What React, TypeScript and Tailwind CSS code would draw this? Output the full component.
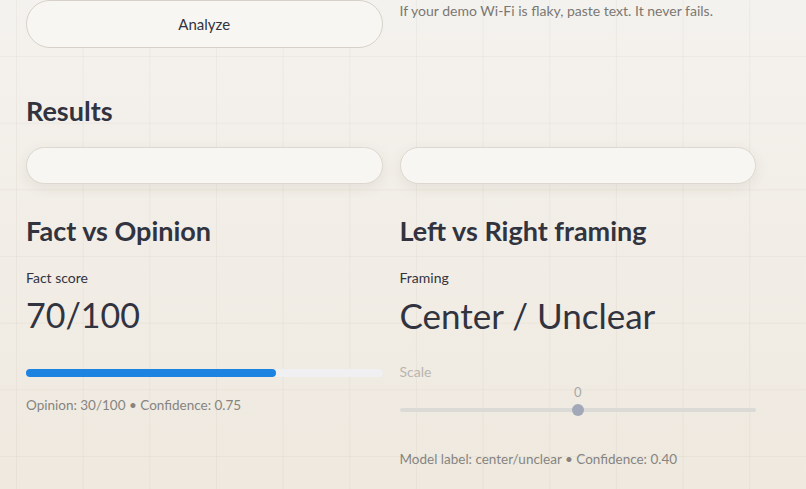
import React from 'react';

const font = { fontFamily: 'Lato, "Noto Sans", sans-serif' };

function EmptyBox() {
  return (
    <div className="h-[37px] rounded-full border border-[#dcd8cf] bg-[#f8f6f2] shadow-[0_4px_14px_rgba(80,60,30,0.08)]" />
  );
}

function FactPanel() {
  const fact = 70;
  return (
    <div className="flex flex-col">
      <h2 className="text-[27px] font-bold leading-[36px] text-[#31333f]">Fact vs Opinion</h2>
      <div className="mt-[19px] text-[14px] leading-[20px] text-[#31333f]">Fact score</div>
      <div className="mt-[5px] text-[34px] leading-[44px] text-[#31333f]">{fact}/100</div>
      <div className="mt-[32px] h-[8px] w-full rounded-full bg-[#f0f0f2]">
        <div className="h-full rounded-full bg-[#1c83e1]" style={{ width: `${fact}%` }} />
      </div>
      <div className="mt-[18px] text-[13.5px] leading-[20px] text-[#86847f]">Opinion: 30/100 • Confidence: 0.75</div>
    </div>
  );
}

function FramingPanel() {
  return (
    <div className="flex flex-col">
      <h2 className="text-[27px] font-bold leading-[36px] text-[#31333f]">Left vs Right framing</h2>
      <div className="mt-[19px] text-[14px] leading-[20px] text-[#31333f]">Framing</div>
      <div className="mt-[5px] text-[35px] leading-[44px] text-[#31333f]">Center / Unclear</div>
      <div className="mt-[25px] text-[14px] leading-[20px] text-[#b9b6b0]">Scale</div>
      <div className="relative mt-[2px] h-[30px]">
        <div className="absolute left-1/2 top-0 -translate-x-1/2 text-[13px] leading-[16px] text-[#a9a8a6]">0</div>
        <div className="absolute left-0 right-0 top-[24px] h-[4px] rounded-full bg-[#dcdad6]" />
        <div className="absolute left-1/2 top-[20px] h-[12px] w-[12px] -translate-x-1/2 rounded-full bg-[#a3a8b8]" />
      </div>
      <div className="mt-[35px] text-[13.5px] leading-[20px] text-[#86847f]">Model label: center/unclear • Confidence: 0.40</div>
    </div>
  );
}

export default function App() {
  return (
    <div
      style={font}
      className="h-[489px] w-[806px] overflow-hidden bg-[#f0ece4] bg-[image:linear-gradient(to_right,rgba(120,100,70,0.06)_1px,transparent_1px),linear-gradient(to_bottom,rgba(120,100,70,0.06)_1px,transparent_1px),linear-gradient(to_bottom,#f4f2ee,#efe9df)] bg-[size:66.67px_66.67px,66.67px_66.67px,100%_100%] bg-[position:16px_-10.67px,16px_-10.67px,0_0]"
    >
      <div className="w-[730px] pl-[26px] box-content">
        <div className="grid grid-cols-2 gap-x-[17px]">
          <button className="h-[48px] rounded-full border border-[#d6d2c9] bg-[#f8f6f2] text-[15px] text-[#31333f]">
            Analyze
          </button>
          <div className="text-[14px] leading-[22px] text-[#7a7873]">
            If your demo Wi-Fi is flaky, paste text. It never fails.
          </div>
        </div>

        <h1 className="mt-[46px] text-[27px] font-bold leading-[34px] text-[#31333f]">Results</h1>

        <div className="mt-[19px] grid grid-cols-2 gap-x-[17px]">
          <EmptyBox />
          <EmptyBox />
        </div>

        <div className="mt-[29px] grid grid-cols-2 gap-x-[17px]">
          <FactPanel />
          <FramingPanel />
        </div>
      </div>
    </div>
  );
}
